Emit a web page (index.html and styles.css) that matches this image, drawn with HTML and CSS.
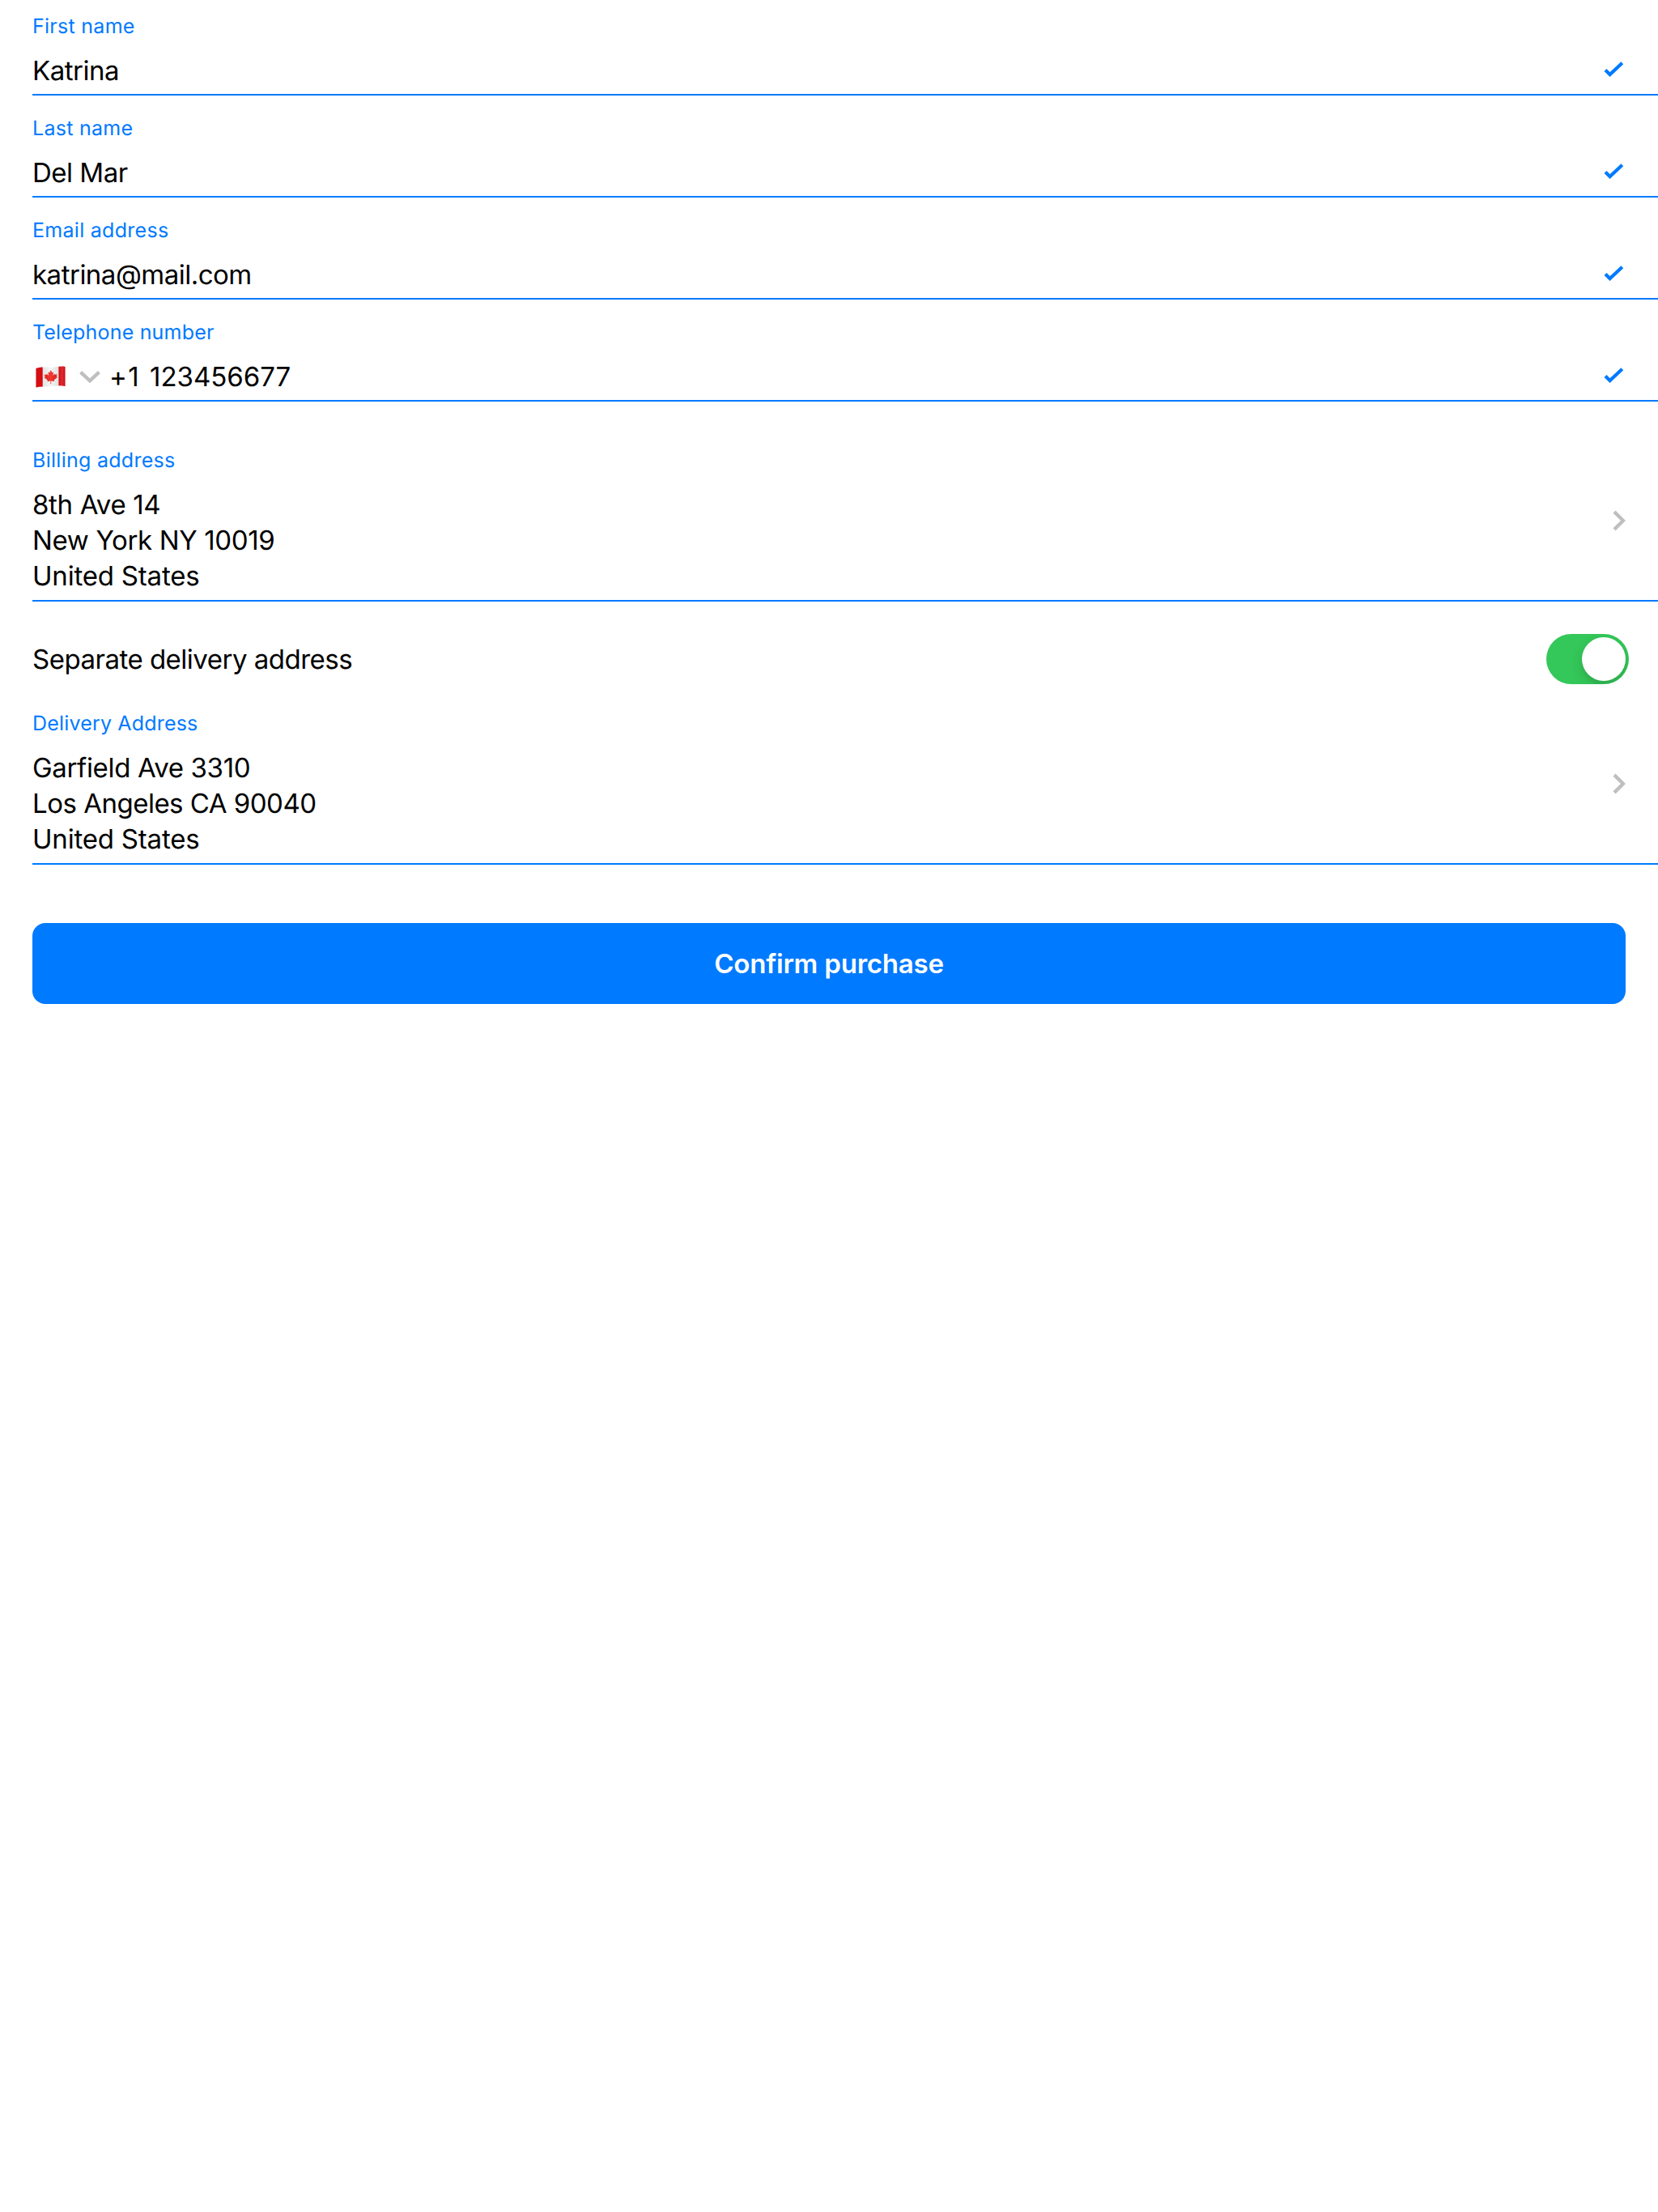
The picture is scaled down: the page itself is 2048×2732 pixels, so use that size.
FILE: index.html
```html
<!DOCTYPE html>
<html lang="en">
<head>
<meta charset="utf-8">
<title>Purchase</title>
<link rel="stylesheet" href="styles.css">
</head>
<body>
<svg width="0" height="0" class="sprite" aria-hidden="true">
  <symbol id="check" viewBox="0 0 28 22"><path d="M3 11.6l5.6 5.5L23.8 2.8" fill="none" stroke="#007aff" stroke-width="4.2"/></symbol>
  <symbol id="chevron" viewBox="0 0 16 28"><path d="M2 3.1L13 14L2 24.9" fill="none" stroke="#bfbfbf" stroke-width="4.3"/></symbol>
</svg>
<main class="form">
  <section class="field first">
    <div class="body">
      <div class="label">First name</div>
      <div class="value tight">Katrina</div>
    </div>
    <svg class="check"><use href="#check"/></svg>
  </section>
  <section class="field">
    <div class="body">
      <div class="label">Last name</div>
      <div class="value tight">Del Mar</div>
    </div>
    <svg class="check"><use href="#check"/></svg>
  </section>
  <section class="field">
    <div class="body">
      <div class="label">Email address</div>
      <div class="value tight">katrina@mail.com</div>
    </div>
    <svg class="check"><use href="#check"/></svg>
  </section>
  <section class="field">
    <div class="body">
      <div class="label close">Telephone number</div>
      <div class="value phone">
        <svg class="flag" viewBox="0 0 37 27">
          <defs>
            <linearGradient id="wave" x1="0" x2="1" y1="0" y2="0">
              <stop offset="0" stop-color="#000" stop-opacity=".14"/>
              <stop offset=".08" stop-color="#000" stop-opacity="0"/>
              <stop offset=".25" stop-color="#000" stop-opacity=".07"/>
              <stop offset=".5" stop-color="#fff" stop-opacity=".1"/>
              <stop offset=".74" stop-color="#000" stop-opacity=".08"/>
              <stop offset=".88" stop-color="#fff" stop-opacity=".12"/>
              <stop offset="1" stop-color="#000" stop-opacity=".16"/>
            </linearGradient>
            <clipPath id="cloth"><path d="M.5 3C6 .9 12 1.5 18.5 1.8S30 -.3 36.5 1V25C30 23.2 25 24.8 18.5 25.3S6 25 .5 26.6Z"/></clipPath>
          </defs>
          <g clip-path="url(#cloth)">
            <path fill="#f6f6f6" d="M0 0h37v27H0z"/>
            <path fill="#dc0d12" d="M0 0h8.7v27H0zM28.4 0h8.6v27h-8.6z"/>
            <path fill="#f0231c" d="M18.8 5l-1.7 3.2-1.7-.8.8 4.5-2.4-2.4-.5 1.4-2.5-.4.9 2.9-1.2.7 4.4 3.6-.5 1.5 4.1-.7-.2 3.7h1l-.2-3.7 4.1.5-.5-1.5 4.3-3.8-1.2-.6.8-2.9-2.5.5-.5-1.3-2.3 2.5.8-4.5-1.6.8z"/>
            <path fill="url(#wave)" d="M0 0h37v27H0z"/>
          </g>
        </svg>
        <svg class="down" viewBox="0 0 28 18"><path d="M2.6 2.6L14 13.4L25.4 2.6" fill="none" stroke="#bfbfbf" stroke-width="4.3"/></svg>
        <span class="code">+1</span>
        <span>123456677</span>
      </div>
    </div>
    <svg class="check"><use href="#check"/></svg>
  </section>
  <section class="field address billing">
    <div class="body">
      <div class="label">Billing address</div>
      <div class="value snug">8th Ave 14<br>New York NY 10019<br><span class="country">United States</span></div>
    </div>
    <svg class="chevron"><use href="#chevron"/></svg>
  </section>
  <section class="switch-row">
    <div class="value tight">Separate delivery address</div>
    <div class="switch"><div class="knob"></div></div>
  </section>
  <section class="field address">
    <div class="body">
      <div class="label close">Delivery Address</div>
      <div class="value snug">Garfield Ave 3310<br><span class="tight">Los Angeles CA 90040</span><br><span class="country">United States</span></div>
    </div>
    <svg class="chevron"><use href="#chevron"/></svg>
  </section>
  <button class="confirm">Confirm purchase</button>
</main>
</body>
</html>
```
FILE: styles.css
```css
body {
  margin: 0;
  background: #fff;
  color: #000;
  font-family: Inter, "Liberation Sans", sans-serif;
  text-rendering: geometricPrecision;
}

.sprite { display: none; }

.form {
  display: flex;
  flex-direction: column;
  padding-left: 40px;
}

.field {
  display: flex;
  justify-content: space-between;
  align-items: flex-end;
  padding: 25px 40px 7px 0;
  border-bottom: 2px solid #007aff;
}

.field.first { padding-top: 17px; }

.label {
  margin-bottom: 16px;
  color: #007aff;
  font-size: 25px;
  line-height: 32px;
  letter-spacing: 0.28px;
}

.label.close { letter-spacing: 0.18px; }

.value {
  font-size: 33px;
  line-height: 44px;
  white-space: nowrap;
}

.snug { letter-spacing: -0.34px; }
.tight { letter-spacing: -0.5px; }
.country { letter-spacing: -0.2px; }

.check {
  width: 28px;
  height: 22px;
  margin-bottom: 12px;
}

.phone {
  display: flex;
  align-items: center;
  padding-left: 4px;
}

.flag {
  width: 37px;
  height: 27px;
}

.down {
  width: 28px;
  height: 18px;
  margin: 2px 0 0 16px;
}

.code {
  width: 50px;
  margin-left: 10px;
  letter-spacing: 1.5px;
}

.field.address {
  align-items: center;
  padding: 10px 40px 8px 0;
}

.billing { margin-top: 47px; }

.chevron {
  width: 16px;
  height: 28px;
}

.switch-row {
  display: flex;
  justify-content: space-between;
  align-items: center;
  padding: 40px 36px 23px 0;
}

.switch {
  display: flex;
  justify-content: flex-end;
  box-sizing: border-box;
  width: 102px;
  height: 62px;
  padding: 4px;
  border-radius: 31px;
  background: #34c759;
  overflow: hidden;
}

.knob {
  width: 54px;
  height: 54px;
  border-radius: 50%;
  background: #fff;
  box-shadow: 0 6px 16px rgba(0, 0, 0, 0.12), 0 6px 2px rgba(0, 0, 0, 0.04);
}

.confirm {
  height: 100px;
  margin: 72px 40px 0 0;
  padding: 0;
  border: 0;
  border-radius: 16px;
  background: #007aff;
  color: #fff;
  font: 600 33px/44px Inter, "Liberation Sans", sans-serif;
  letter-spacing: -0.2px;
}
```
